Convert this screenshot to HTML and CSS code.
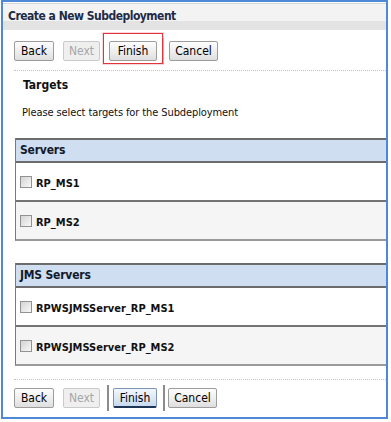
FILE: index.html
```html
<!DOCTYPE html>
<html lang="en">
<head>
    <meta charset="UTF-8">
    <title>Create a New Subdeployment</title>
    <link rel="stylesheet" href="styles.css">
</head>
<body>
    <div class="frame">
        <div class="title-bar">Create a New Subdeployment</div>

        <div class="btn-row top">
            <button class="btn back">Back</button>
            <button class="btn next" disabled>Next</button>
            <span class="sep first"></span>
            <span class="finish-wrap">
                <button class="btn finish">Finish</button>
                <span class="highlight"></span>
            </span>
            <span class="sep second"></span>
            <button class="btn cancel">Cancel</button>
        </div>
        <div class="dots"></div>

        <h3 class="section-title">Targets</h3>
        <p class="hint">Please select targets for the Subdeployment</p>

        <div class="tbl">
            <div class="tbl-head">Servers</div>
            <label class="tbl-row"><input type="checkbox"><span>RP_MS1</span></label>
            <label class="tbl-row alt"><input type="checkbox"><span>RP_MS2</span></label>
        </div>

        <div class="tbl">
            <div class="tbl-head">JMS Servers</div>
            <label class="tbl-row"><input type="checkbox"><span>RPWSJMSServer_RP_MS1</span></label>
            <label class="tbl-row alt"><input type="checkbox"><span>RPWSJMSServer_RP_MS2</span></label>
        </div>

        <div class="dots bottom-dots"></div>
        <div class="btn-row bottom">
            <button class="btn back">Back</button>
            <button class="btn next" disabled>Next</button>
            <span class="sep first"></span>
            <button class="btn finish default">Finish</button>
            <span class="sep second"></span>
            <button class="btn cancel">Cancel</button>
        </div>
    </div>
</body>
</html>
```

FILE: styles.css
```css
* {
    box-sizing: border-box;
}

body {
    margin: 0;
    background-color: #ffffff;
    font-family: Tahoma, 'DejaVu Sans Condensed', 'Liberation Sans', sans-serif;
    color: #111111;
}

.frame {
    margin-left: 1px;
    width: 387px;
    height: 419px;
    border: 2px solid #4d89d6;
    background-color: #ffffff;
    overflow: hidden;
}

.title-bar {
    height: 28px;
    padding-left: 5px;
    font-size: 12px;
    font-weight: bold;
    letter-spacing: -0.5px;
    line-height: 29px;
    color: #1e2b48;
    background: linear-gradient(to bottom,
        #ffffff 0, #ffffff 1px,
        #d6d6d6 1px, #d6d6d6 2px,
        #f3f3f3 2px, #f3f3f3 19px,
        #e3e3e3 19px, #e3e3e3 28px);
}

/* button rows */
.btn-row {
    display: flex;
    align-items: center;
    height: 20px;
    padding-left: 11px;
}

.btn-row.top {
    margin-top: 11px;
}

.btn {
    height: 20px;
    padding: 0;
    font-family: inherit;
    font-size: 12px;
    color: #000000;
    border: 1px solid #9c9c9c;
    border-radius: 2px;
    background: linear-gradient(to bottom, #fdfdfd, #ececec 60%, #dedede);
}

.btn.back { width: 40px; }
.btn.next { width: 37px; margin-left: 9px; }
.btn.cancel { width: 49px; }

.btn.next {
    color: #a6a6a6;
    border-color: #cacaca;
    background: #efefef;
}

.sep {
    width: 2px;
    height: 26px;
    background-color: #8c8c8c;
}

.top .sep.first { margin-left: 4px; background-color: transparent; }
.top .sep.second { margin-left: 6px; background-color: #c4c4c4; width: 1px; }
.top .finish-wrap { margin-left: 3px; }
.top .btn.finish { width: 48px; }
.top .btn.cancel { margin-left: 5px; }

.bottom .sep.first { margin-left: 7px; }
.bottom .btn.finish { width: 44px; margin-left: 4px; }
.bottom .sep.second { margin-left: 6px; }
.bottom .btn.cancel { margin-left: 3px; }

.btn.default {
    border-color: #7c93b3 #7c93b3 #1f3556;
    border-bottom-width: 2px;
    background: linear-gradient(to bottom, #f2f7fd, #d9e6f6 60%, #c8daf0);
}

.finish-wrap {
    position: relative;
    display: flex;
}

/* red annotation box around the first Finish */
.highlight {
    position: absolute;
    z-index: 1;
    left: -6px;
    top: -8px;
    width: 60px;
    height: 31px;
    border: 1px solid #e3343e;
    box-shadow: 0 0 0 1px rgba(240, 140, 150, 0.35);
}

.dots {
    margin: 9px 0 0 11px;
    border-top: 1px dotted #c4c4c4;
}

.bottom-dots {
    margin-top: 13px;
    margin-bottom: 8px;
}

.section-title {
    margin: 7px 0 0 20px;
    font-size: 12px;
    line-height: 15px;
    font-weight: bold;
    color: #111111;
}

.hint {
    margin: 13px 0 0 19px;
    font-size: 11px;
    line-height: 14px;
    letter-spacing: -0.1px;
}

/* target tables */
.tbl {
    width: 420px;
    margin: 18px 0 0 12px;
    border-left: 1px solid #7a7a7a;
    border-bottom: 2px solid #9a9a9a;
}

.tbl + .tbl {
    margin-top: 22px;
}

.tbl-head {
    height: 25px;
    padding-left: 4px;
    font-size: 12px;
    font-weight: bold;
    letter-spacing: -0.2px;
    line-height: 21px;
    color: #111a2c;
    background-color: #cfdef0;
    border-top: 2px solid #6c6c6c;
    border-bottom: 2px solid #6c6c6c;
}

.tbl-row {
    display: flex;
    align-items: center;
    height: 39px;
    padding-left: 4px;
    font-size: 11px;
    font-weight: bold;
    border-bottom: 2px solid #737373;
}

.tbl-row span {
    padding-top: 4px;
}

.tbl-row.alt {
    height: 37px;
    border-bottom: none;
    background-color: #f5f5f5;
}

.tbl-row input {
    appearance: none;
    width: 12px;
    height: 12px;
    margin: 0 4px 0 0;
    border: 1px solid #929292;
    background: linear-gradient(135deg, #d4d4d4, #f8f8f8);
}
```
